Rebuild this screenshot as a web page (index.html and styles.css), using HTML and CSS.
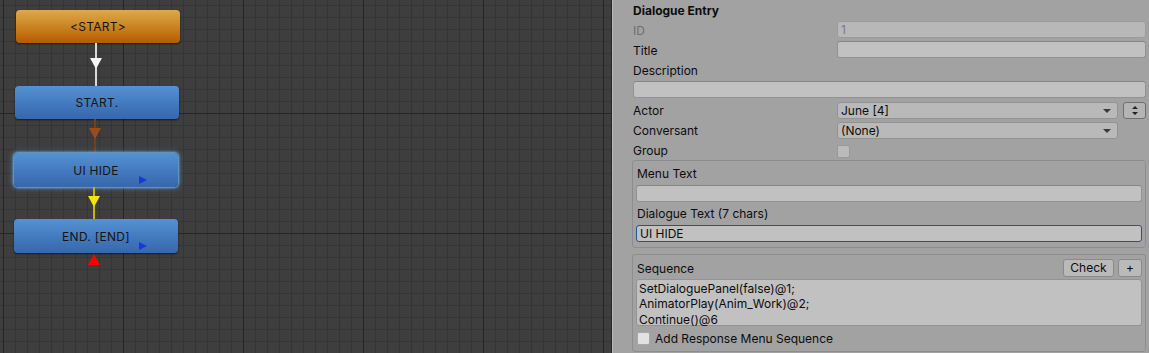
FILE: index.html
```html
<!DOCTYPE html>
<html lang="en">
<head>
  <meta charset="UTF-8" />
  <title>Dialogue Editor</title>
  <link rel="stylesheet" href="styles.css">
</head>
<body>
  <div class="app">
    <div class="graph">
      <div class="node orange n-start">&lt;START&gt;</div>
      <div class="link white l1"></div>
      <div class="arrow down white a1"></div>

      <div class="node blue n-first">START.</div>
      <div class="link brown l2"></div>
      <div class="arrow down brown a2"></div>

      <div class="node blue selected n-hide">UI HIDE<span class="play"></span></div>
      <div class="link yellow l3"></div>
      <div class="arrow down yellow a3"></div>

      <div class="node blue n-end">END. [END]<span class="play"></span></div>
      <div class="arrow up red a4"></div>
    </div>

    <div class="split"></div>

    <div class="inspector">
      <div class="row"><span class="heading">Dialogue Entry</span></div>
      <div class="row"><span class="label muted">ID</span><div class="field disabled">1</div></div>
      <div class="row"><span class="label">Title</span><div class="field"></div></div>
      <div class="row single"><span class="label">Description</span></div>
      <div class="row single"><div class="field"></div></div>
      <div class="row">
        <span class="label">Actor</span>
        <div class="pair">
          <div class="dropdown">June [4]</div>
          <div class="stepper">
            <svg width="6" height="9" viewBox="0 0 6 9"><path d="M3 0 L6 3 L0 3 Z M0 6 L6 6 L3 9 Z" fill="#222"/></svg>
          </div>
        </div>
      </div>
      <div class="row"><span class="label">Conversant</span><div class="pair"><div class="dropdown">(None)</div><div class="spacer"></div></div></div>
      <div class="row"><span class="label">Group</span><div><span class="check"></span></div></div>

      <div class="box menu-box">
        <div class="box-label">Menu Text</div>
        <div class="field"></div>
        <div class="box-label gap">Dialogue Text (7 chars)</div>
        <div class="field focused">UI HIDE</div>
      </div>

      <div class="box seq-box">
        <div class="seq-head">
          <span>Sequence</span>
          <div class="buttons">
            <span class="btn check-btn">Check</span>
            <span class="btn plus-btn">+</span>
          </div>
        </div>
        <div class="textarea">
          <div>SetDialoguePanel(false)@1;</div>
          <div>AnimatorPlay(Anim_Work)@2;</div>
          <div>Continue()@6</div>
        </div>
        <div class="toggle"><span class="check light"></span>Add Response Menu Sequence</div>
      </div>
    </div>
  </div>
</body>
</html>
```

FILE: styles.css
```css
html, body {
  margin: 0;
  height: 100%;
  overflow: hidden;
}
body {
  font-family: Inter, "Liberation Sans", sans-serif;
  font-size: 12px;
  color: #0c0c0c;
}
.app {
  display: flex;
  width: 1149px;
  height: 353px;
}

/* node graph */
.graph {
  position: relative;
  width: 611px;
  height: 353px;
  background-color: #3e3e3e;
  background-image:
    linear-gradient(to right, #252525 1px, transparent 1px),
    linear-gradient(to bottom, #252525 1px, transparent 1px),
    linear-gradient(to right, #353535 1px, transparent 1px),
    linear-gradient(to bottom, #353535 1px, transparent 1px);
  background-size: 120px 120px, 120px 120px, 12px 12px, 12px 12px;
  background-position: 3px 0, 0 113px, 3px 0, 0 5px;
  overflow: hidden;
}
.node {
  position: absolute;
  width: 164px;
  height: 33px;
  border-radius: 4px;
  display: flex;
  align-items: center;
  justify-content: center;
  color: #141414;
  font-size: 12px;
  letter-spacing: 0.3px;
  box-shadow: 0 1px 2px rgba(0, 0, 0, 0.6);
}
.orange {
  background: linear-gradient(#dcaa4c, #c9801e 55%, #b65a00);
}
.blue {
  background: linear-gradient(#5592d2, #4279be 55%, #3767ad);
}
.selected {
  box-shadow: 0 0 2px 1px rgba(120, 185, 240, 0.8), 0 0 5px 2px rgba(90, 160, 225, 0.45);
}
.n-start { left: 16px; top: 10px; }
.n-first { left: 15px; top: 86px; }
.n-hide { left: 14px; top: 153px; height: 34px; }
.n-end { left: 14px; top: 219px; height: 34px; }
.play {
  position: absolute;
  left: 125px;
  top: 23px;
  width: 0;
  height: 0;
  border-left: 8px solid #1b34e6;
  border-top: 4px solid transparent;
  border-bottom: 4px solid transparent;
}

.link {
  position: absolute;
  width: 2px;
}
.link.white { background: #d8d8d8; left: 95px; top: 43px; height: 43px; }
.link.brown { background: #7b3c18; left: 94px; top: 119px; height: 34px; }
.link.yellow { background: #c9b400; left: 93px; top: 187px; height: 32px; }

.arrow {
  position: absolute;
  width: 0;
  height: 0;
  border-left: 6px solid transparent;
  border-right: 6px solid transparent;
}
.arrow.down { border-top: 11px solid; }
.arrow.up { border-bottom: 11px solid; }
.arrow.white { color: #f4f4f4; }
.arrow.brown { color: #9a4c1c; }
.arrow.yellow { color: #f0e600; }
.arrow.red { color: #ff0000; }
.a1 { left: 90px; top: 58px; }
.a2 { left: 89px; top: 128px; }
.a3 { left: 88px; top: 196px; }
.a4 { left: 88px; top: 254px; }

.split {
  width: 1px;
  background: #262626;
}

/* inspector */
.inspector {
  flex: 1;
  background: #a2a2a2;
  border-left: 1px solid #b9b9b9;
  padding: 0 3px 0 20px;
}
.row {
  display: grid;
  grid-template-columns: 204px 1fr;
  height: 20px;
  align-items: center;
}
.row.single {
  grid-template-columns: 1fr;
}
.heading {
  font-weight: 700;
}
.muted {
  color: #707070;
}
.field {
  height: 17px;
  box-sizing: border-box;
  background: #c1c1c1;
  border: 1px solid #939393;
  border-top-color: #858585;
  border-radius: 3px;
  padding: 0 3px;
  line-height: 15px;
  margin-top: 1px;
  align-self: start;
}
.field.disabled {
  background: #b8b8b8;
  border-color: #9c9c9c;
  color: #7c7c7c;
}
.field.focused {
  border-color: #1f5597;
}
.pair {
  display: flex;
  gap: 5px;
  align-items: center;
}
.dropdown {
  position: relative;
  width: 281px;
  height: 17px;
  box-sizing: border-box;
  background: #b9b9b9;
  border: 1px solid #939393;
  border-radius: 3px;
  padding: 0 3px;
  line-height: 15px;
}
.dropdown::after {
  content: "";
  position: absolute;
  right: 6px;
  top: 6px;
  border-left: 4px solid transparent;
  border-right: 4px solid transparent;
  border-top: 4px solid #3a3a3a;
}
.stepper {
  width: 23px;
  height: 17px;
  box-sizing: border-box;
  background: #b4b4b4;
  border: 1px solid #6f6f6f;
  border-radius: 3px;
  display: flex;
  align-items: center;
  justify-content: center;
}
.spacer {
  width: 23px;
}
.check {
  display: inline-block;
  width: 13px;
  height: 13px;
  box-sizing: border-box;
  background: #bbbbbb;
  border: 1px solid #999;
  border-radius: 2px;
  vertical-align: middle;
}
.check.light {
  background: #e2e2e2;
  border-color: #a8a8a8;
  margin-right: 5px;
}

.box {
  border: 1px solid #8d8d8d;
  border-radius: 3px;
  margin-left: -1px;
  padding: 3px 3px 5px 3px;
}
.box-label {
  height: 20px;
  line-height: 20px;
  padding-left: 1px;
}
.box-label.gap {
  margin-top: 2px;
}
.seq-box {
  margin-top: 6px;
  padding: 4px 3px 4px 3px;
}
.seq-head {
  display: flex;
  justify-content: space-between;
  align-items: center;
  height: 19px;
  padding-left: 1px;
}
.buttons {
  display: flex;
  gap: 4px;
  align-items: flex-start;
  height: 19px;
}
.btn {
  height: 18px;
  box-sizing: border-box;
  background: #bababa;
  border: 1px solid #8a8a8a;
  border-radius: 3px;
  line-height: 16px;
  text-align: center;
}
.check-btn { width: 51px; }
.plus-btn { width: 24px; }
.textarea {
  margin-top: 1px;
  height: 47px;
  box-sizing: border-box;
  background: #c1c1c1;
  border: 1px solid #939393;
  border-radius: 3px;
  padding: 1px 2px;
  line-height: 15.3px;
}
.toggle {
  display: flex;
  align-items: center;
  height: 18px;
  margin-top: 3px;
  padding-left: 1px;
}
```
